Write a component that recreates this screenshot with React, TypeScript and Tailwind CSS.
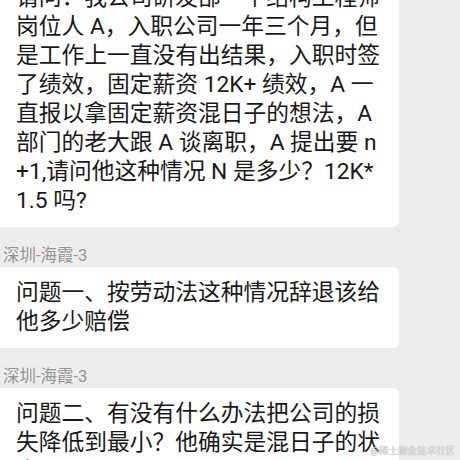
import React from 'react';

const font = { fontFamily: 'Roboto, "Noto Sans CJK SC", sans-serif' };

type Msg = { name?: string; lines: string[] };

const messages: Msg[] = [
  {
    lines: [
      '请问：我公司研发部一个结构工程师',
      '岗位人 A，入职公司一年三个月，但',
      '是工作上一直没有出结果，入职时签',
      '了绩效，固定薪资 12K+ 绩效，A 一',
      '直报以拿固定薪资混日子的想法，A',
      '部门的老大跟 A 谈离职，A 提出要 n',
      '+1,请问他这种情况 N 是多少？12K*',
      '1.5 吗?',
    ],
  },
  {
    name: '深圳-海霞-3',
    lines: ['问题一、按劳动法这种情况辞退该给', '他多少赔偿'],
  },
  {
    name: '深圳-海霞-3',
    lines: ['问题二、有没有什么办法把公司的损', '失降低到最小？他确实是混日子的状', '态'],
  },
];

const Bubble: React.FC<{ msg: Msg }> = ({ msg }) => (
  <div className="flex flex-col">
    {msg.name && (
      <div className="mt-[19px] pl-[3px] text-[16.5px] leading-[20px] text-[#939393]">{msg.name}</div>
    )}
    <div className="mt-px w-[399px] rounded-r-[6px] bg-white pl-[16px] pt-[11px] pb-[12px] text-[22.75px] leading-[29px] text-[#191919]">
      {msg.lines.map((l, i) => (
        <div key={i} className="whitespace-nowrap">
          {l}
        </div>
      ))}
    </div>
  </div>
);

export default function App() {
  return (
    <div className="relative h-[460px] w-[460px] overflow-hidden bg-[#ededed]" style={font}>
      <div className="-mt-[29px] flex flex-col">
        {messages.map((m, i) => (
          <Bubble key={i} msg={m} />
        ))}
      </div>
      <div
        className="absolute bottom-[3px] right-[5px] text-[9.5px] leading-[12px] text-[#e4e4e4]"
        style={{ textShadow: '0 0 1px #8a8a8a' }}
      >
        @稀土掘金技术社区
      </div>
    </div>
  );
}
